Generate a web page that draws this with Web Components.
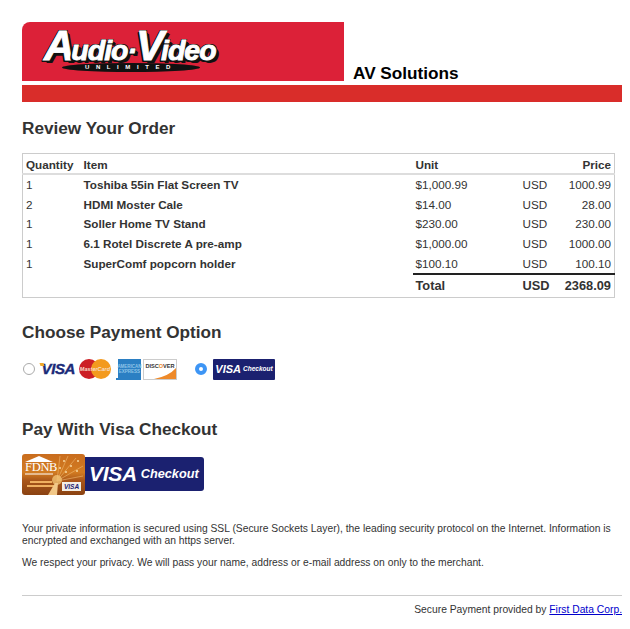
<!DOCTYPE html>
<html>
<head>
<meta charset="utf-8">
<title>Review Your Order</title>
<style>
  html, body { margin: 0; background: #fff; }
  body { font-family: "Liberation Sans", Arial, sans-serif; color: #333; }
</style>
</head>
<body>
<av-page>
  <av-header title-text="AV Solutions"></av-header>
  <av-section heading="Review Your Order" gap="14" top="16">
    <order-table></order-table>
  </av-section>
  <av-section heading="Choose Payment Option" gap="14" top="24">
    <pay-options></pay-options>
  </av-section>
  <av-section heading="Pay With Visa Checkout" gap="13" top="38">
    <checkout-button></checkout-button>
  </av-section>
  <av-notes></av-notes>
  <av-footer></av-footer>
</av-page>

<script>
const pageTemplate = document.createElement('template');
pageTemplate.innerHTML = `
  <style>
    :host { display: block; padding: 22px 8px 0 22px; }
  </style>
  <slot></slot>
`;

class AvPage extends HTMLElement {
  constructor() {
    super();
    this.attachShadow({ mode: 'open' }).appendChild(pageTemplate.content.cloneNode(true));
  }
}
customElements.define('av-page', AvPage);

const headerTemplate = document.createElement('template');
headerTemplate.innerHTML = `
  <style>
    :host { display: block; }
    .top { display: flex; align-items: flex-end; height: 59px; }
    .logo {
      width: 322px; height: 59px; background: #dc2138; border-top-left-radius: 8px;
      flex: none; box-sizing: border-box; padding: 7px 0 0 22px;
    }
    .mark { position: relative; width: 178px; height: 44px; }
    .word {
      font: italic bold 28.5px/34px "Liberation Sans", sans-serif; color: #fff; letter-spacing: -1px;
      white-space: nowrap; display: block; -webkit-text-stroke: 0.9px #fff;
      text-shadow: 2px 2px 0 #111, 3px 3px 0 #111, -2px 1px 0 #111, 1px -1px 0 #111, -1px -1px 0 #111, -2px 2px 0 #111;
    }
    .word b { font-size: 42px; letter-spacing: -3px; }
    .oval {
      position: absolute; left: 18px; top: 34px; width: 138px; height: 9px; border-radius: 50%;
      background: #111; color: #fff; font: bold 6px/9px "Liberation Sans", sans-serif;
      letter-spacing: 6.6px; text-align: center;
    }
    h1 { margin: 0 0 -2px 9px; font: bold 17.2px/20px "Liberation Sans", sans-serif; color: #000; }
    .bar { height: 17px; margin-top: 4px; background: #d92d2a; }
  </style>
  <div class="top">
    <div class="logo">
      <div class="mark">
        <span class="word"><b>A</b>udio&middot;<b>V</b>ideo</span>
        <span class="oval">UNLIMITED</span>
      </div>
    </div>
    <h1></h1>
  </div>
  <div class="bar"></div>
`;

class AvHeader extends HTMLElement {
  constructor() {
    super();
    this.attachShadow({ mode: 'open' }).appendChild(headerTemplate.content.cloneNode(true));
  }
  connectedCallback() {
    this.shadowRoot.querySelector('h1').textContent = this.getAttribute('title-text');
  }
}
customElements.define('av-header', AvHeader);

const sectionTemplate = document.createElement('template');
sectionTemplate.innerHTML = `
  <style>
    :host { display: block; }
    h2 { margin: 0; font: bold 17.2px/21px "Liberation Sans", sans-serif; color: #333; }
  </style>
  <h2></h2>
  <div class="body"><slot></slot></div>
`;

class AvSection extends HTMLElement {
  constructor() {
    super();
    this.attachShadow({ mode: 'open' }).appendChild(sectionTemplate.content.cloneNode(true));
  }
  connectedCallback() {
    this.shadowRoot.querySelector('h2').textContent = this.getAttribute('heading');
    this.shadowRoot.querySelector('.body').style.marginTop = this.getAttribute('gap') + 'px';
    this.style.marginTop = (this.getAttribute('top') || 16) + 'px';
  }
}
customElements.define('av-section', AvSection);

const orderRows = [
  ['1', 'Toshiba 55in Flat Screen TV', '$1,000.99', '1000.99'],
  ['2', 'HDMI Moster Cale', '$14.00', '28.00'],
  ['1', 'Soller Home TV Stand', '$230.00', '230.00'],
  ['1', '6.1 Rotel Discrete A pre-amp', '$1,000.00', '1000.00'],
  ['1', 'SuperComf popcorn holder', '$100.10', '100.10'],
];

const tableTemplate = document.createElement('template');
tableTemplate.innerHTML = `
  <style>
    :host { display: block; width: 593px; }
    table {
      width: 100%; border-collapse: collapse; table-layout: fixed; box-sizing: border-box;
      border: 1px solid #ccc; font: 11.7px/14px "Liberation Sans", sans-serif; color: #333;
    }
    th, td { padding: 0 3px; height: 19.7px; text-align: left; white-space: nowrap; }
    thead th { height: 17px; padding-top: 2px; border-bottom: 2px solid #ddd; font-weight: bold; }
    .item { font-weight: bold; }
    .num { text-align: right; }
    tfoot td { height: 22px; border-top: 2px solid #222; font-weight: bold; font-size: 12.8px; }
    tfoot .blank { border-top: 0; }
  </style>
  <table>
    <colgroup>
      <col style="width:58px"><col style="width:332px"><col style="width:107px"><col style="width:31px"><col>
    </colgroup>
    <thead>
      <tr><th>Quantity</th><th>Item</th><th>Unit</th><th></th><th class="num">Price</th></tr>
    </thead>
    <tbody></tbody>
    <tfoot>
      <tr><td class="blank" colspan="2"></td><td>Total</td><td>USD</td><td class="num">2368.09</td></tr>
    </tfoot>
  </table>
`;

class OrderTable extends HTMLElement {
  constructor() {
    super();
    this.attachShadow({ mode: 'open' }).appendChild(tableTemplate.content.cloneNode(true));
  }
  connectedCallback() {
    const body = this.shadowRoot.querySelector('tbody');
    orderRows.forEach(([qty, item, unit, price]) => {
      const tr = document.createElement('tr');
      tr.innerHTML = `<td>${qty}</td><td class="item">${item}</td><td>${unit}</td><td>USD</td><td class="num">${price}</td>`;
      body.appendChild(tr);
    });
  }
}
customElements.define('order-table', OrderTable);

const optionsTemplate = document.createElement('template');
optionsTemplate.innerHTML = `
  <style>
    :host { display: flex; align-items: center; height: 24px; }
    .radio { width: 12px; height: 12px; border-radius: 50%; box-sizing: border-box; flex: none; margin-left: 1px; }
    .off { border: 1px solid #aaa; background: #fff; }
    .on { border: 4px solid #3d95f5; background: #fff; margin-left: 18px; }
    .visa {
      position: relative; flex: none; width: 34px; margin-left: 6px; text-align: right;
      font: italic bold 15px/16px "Liberation Sans", sans-serif; color: #1a2a78; letter-spacing: -0.4px;
      -webkit-text-stroke: 0.4px #1a2a78;
    }
    .visa::before {
      content: ""; position: absolute; left: -1px; top: 2px; width: 4px; height: 3px; background: #f0a828;
      transform: skewX(20deg);
    }
    .mc { position: relative; width: 32px; height: 20px; margin-left: 4px; flex: none; }
    .mc i { position: absolute; top: 0; width: 20px; height: 20px; border-radius: 50%; }
    .mc i:first-child { left: 0; background: #cc1f25; }
    .mc i:nth-child(2) { right: 0; background: #f39a1e; }
    .mc span {
      position: absolute; left: 0; right: 0; top: 6px; text-align: center; color: #f6dcc8;
      font: italic bold 5.5px/8px "Liberation Sans", sans-serif;
    }
    .amex {
      position: relative; width: 23px; height: 21px; margin-left: 7px; background: #2b7fc3; flex: none; color: #8fc4e8;
      font: bold 4.5px/5px "Liberation Sans", sans-serif; text-align: center; display: flex;
      align-items: center; justify-content: center; overflow: visible;
    }
    .amex::before { content: ""; position: absolute; left: -2px; bottom: 0; width: 2px; height: 2px; background: #2b7fc3; }
    .disc {
      position: relative; width: 34px; height: 21px; margin-left: 2px; flex: none; box-sizing: border-box; border: 1px solid #ccc;
      font: bold 5.6px/13px "Liberation Sans", sans-serif; color: #333; text-align: center; overflow: hidden;
    }
    .disc em { font-style: normal; color: #ee8a2a; }
    .disc svg { position: absolute; left: 0; top: 0; }
    .disc span { position: relative; }
    .vc {
      display: flex; align-items: center; justify-content: center; gap: 2px; width: 62px; height: 21px; margin-left: 6px;
      background: #1b2170; border-radius: 1px; color: #fff; flex: none;
    }
    .vc b { font: italic bold 11px/12px "Liberation Sans", sans-serif; }
    .vc span { font: italic bold 6.5px/10px "Liberation Sans", sans-serif; }
  </style>
  <span class="radio off"></span>
  <span class="visa">VISA</span>
  <span class="mc"><i></i><i></i><span>MasterCard</span></span>
  <span class="amex">AMERICAN<br>EXPRESS</span>
  <span class="disc">
    <svg width="32" height="19" viewBox="0 0 32 19"><path d="M10 19 Q25 16 32 8 V19 Z" fill="#ee8a2a"/></svg>
    <span>DISC<em>O</em>VER</span>
  </span>
  <span class="radio on"></span>
  <span class="vc"><b>VISA</b><span>Checkout</span></span>
`;

class PayOptions extends HTMLElement {
  constructor() {
    super();
    this.attachShadow({ mode: 'open' }).appendChild(optionsTemplate.content.cloneNode(true));
  }
}
customElements.define('pay-options', PayOptions);

const checkoutTemplate = document.createElement('template');
checkoutTemplate.innerHTML = `
  <style>
    :host { display: flex; align-items: center; height: 42px; }
    .card {
      position: relative; width: 63px; height: 41px; border-radius: 3px; flex: none; overflow: hidden;
      background: linear-gradient(180deg, #c96d1e 0, #d27c22 45%, #a9561a 65%, #8a4212 100%);
    }
    .card svg { position: absolute; left: 0; top: 0; }
    .bank { position: absolute; left: 3px; top: 8px; width: 28px; text-align: center; color: #fff; font: 12.5px/11px "Liberation Serif", serif; letter-spacing: -0.3px; }
    .mini {
      position: absolute; right: 4px; bottom: 4px; width: 19px; height: 9px; background: #f3efe6; color: #1b2170;
      font: italic bold 6.5px/9px "Liberation Sans", sans-serif; text-align: center;
    }
    .btn {
      display: flex; align-items: center; gap: 4px; box-sizing: border-box; width: 119px; height: 34px; padding-left: 4px;
      background: #1b2170; border-radius: 0 3px 3px 0; color: #fff; flex: none;
    }
    .btn b { font: italic bold 21px/22px "Liberation Sans", sans-serif; letter-spacing: -0.3px; }
    .btn span { font: italic bold 12.7px/16px "Liberation Sans", sans-serif; }
  </style>
  <div class="card">
    <svg width="63" height="41" viewBox="0 0 63 41">
      <g stroke="#f0b870" stroke-width="1" opacity="0.6">
        <path d="M35 27 L38 2 M35 27 L46 2 M35 27 L54 4 M35 27 L61 12 M35 27 L61 22"/>
      </g>
      <g fill="#f7d9a0">
        <circle cx="42" cy="7" r="1"/><circle cx="49" cy="12" r="1"/><circle cx="56" cy="7" r="1"/>
        <circle cx="44" cy="18" r="1"/><circle cx="55" cy="17" r="1"/><circle cx="38" cy="14" r="1"/>
      </g>
      <circle cx="35" cy="26" r="5" fill="#f5c878" opacity="0.75"/>
      <path d="M8 27 H30 V29 H8 Z M5 31 H33 V33 H5 Z" fill="#f0b060"/>
      <path d="M26 41 L33 29 L36 29 L35 41 Z" fill="#f2c888"/>
      <path d="M3 8 L17 2 L31 8 Z" fill="#fff"/>
      <path d="M3 20 H31" stroke="#fff" stroke-width="1"/>
    </svg>
    <div class="bank">FDNB</div>
    <div class="mini">VISA</div>
  </div>
  <div class="btn"><b>VISA</b><span>Checkout</span></div>
`;

class CheckoutButton extends HTMLElement {
  constructor() {
    super();
    this.attachShadow({ mode: 'open' }).appendChild(checkoutTemplate.content.cloneNode(true));
  }
}
customElements.define('checkout-button', CheckoutButton);

const notesTemplate = document.createElement('template');
notesTemplate.innerHTML = `
  <style>
    :host { display: block; margin-top: 28px; font: 10.3px/12px "Liberation Sans", sans-serif; color: #333; }
    p { margin: 0 0 10px; }
  </style>
  <p>Your private information is secured using SSL (Secure Sockets Layer), the leading security protocol on the Internet. Information is encrypted and exchanged with an https server.</p>
  <p>We respect your privacy. We will pass your name, address or e-mail address on only to the merchant.</p>
`;

class AvNotes extends HTMLElement {
  constructor() {
    super();
    this.attachShadow({ mode: 'open' }).appendChild(notesTemplate.content.cloneNode(true));
  }
}
customElements.define('av-notes', AvNotes);

const footerTemplate = document.createElement('template');
footerTemplate.innerHTML = `
  <style>
    :host {
      display: block; margin-top: 26px; padding-top: 7px; border-top: 1px solid #ccc; text-align: right;
      font: 10.3px/14px "Liberation Sans", sans-serif; color: #333;
    }
    a { color: #00c; text-decoration: underline; }
  </style>
  Secure Payment provided by <a href="#">First Data Corp.</a>
`;

class AvFooter extends HTMLElement {
  constructor() {
    super();
    this.attachShadow({ mode: 'open' }).appendChild(footerTemplate.content.cloneNode(true));
  }
}
customElements.define('av-footer', AvFooter);
</script>
</body>
</html>
